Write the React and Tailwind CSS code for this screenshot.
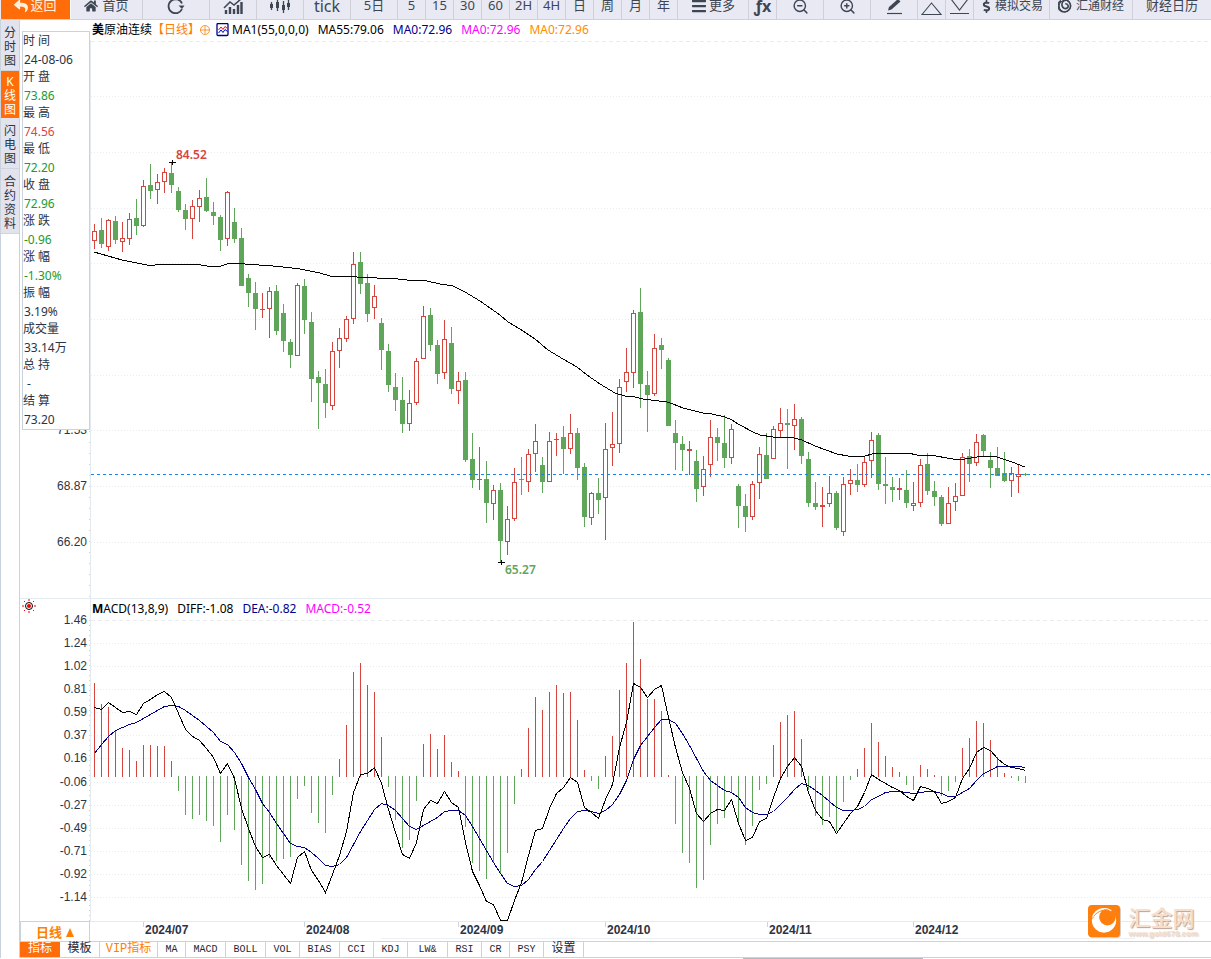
import React from "react";
import { FaReply, FaHome, FaBars, FaDollarSign } from "react-icons/fa";
import { FiZoomIn, FiZoomOut } from "react-icons/fi";

const UP = "#d6453d";
const DOWN = "#5fa55a";
const GRID = "#e9ebee";
const STEP = 7;
const FIRST_X = 94;
const ZERO_Y = 776;

// r = rising, g = falling; then high, body top, body bottom, low
const candles = `r224,231,241,249 g218,230,244,248 r219,220,247,251 g216,221,240,244 r222,238,242,252 r213,219,239,245
g199,218,226,235 r180,186,226,227 g164,185,191,199 r174,182,190,204 r168,172,182,193 g162,173,185,193 g187,191,210,212
g204,210,219,230 r200,206,219,239 r190,198,207,222 g178,197,211,212 g202,212,216,225 g215,217,240,251 r191,192,239,246
g208,222,239,243 g228,238,286,286 g274,278,293,307 g282,293,309,330 r293,309,310,318 r287,291,309,338 g285,291,331,335
g304,313,341,352 g339,342,355,368 r283,285,356,356 g279,286,320,334 g312,322,379,402 g371,377,383,429 g369,384,403,418
r342,351,406,410 r328,338,351,368 r316,319,339,342 r252,264,319,324 g252,262,284,294 g274,283,314,322 r285,296,308,319
g318,323,350,370 g344,351,385,392 g373,387,400,411 g377,400,424,433 r390,403,424,431 r358,361,403,405 r306,316,359,359
g308,315,345,351 g340,345,374,384 r320,339,373,379 g327,343,389,394 r372,381,391,404 g372,380,460,462 g433,459,480,488
r447,479,480,490 g461,479,503,523 r485,490,504,520 g483,490,541,562 r506,519,542,555 r468,482,519,521 g457,479,480,495
r449,454,482,492 r424,441,454,472 g457,465,482,493 r432,441,482,482 r433,439,440,456 g426,437,449,474 r414,433,449,454
g428,433,468,480 g463,467,517,527 r492,493,518,525 g478,493,500,514 r423,449,498,540 r412,444,448,466 r379,387,444,453
r348,372,382,392 r310,313,373,388 g288,312,384,408 g371,385,395,432 r334,348,394,396 g338,345,350,369 g358,360,426,426
g420,433,443,470 g436,444,450,471 r441,449,451,475 g450,461,489,502 r456,469,487,496 r420,437,465,477 g428,437,443,461
g415,443,458,468 r424,429,458,464 g484,486,506,528 g494,506,517,532 r481,484,517,520 r447,454,483,499 g433,455,479,479
r426,429,459,459 r408,423,431,437 g409,423,425,469 r404,419,426,450 g417,419,456,464 g452,459,503,507 g482,503,507,510
r487,505,507,527 r476,493,504,507 g491,493,528,530 r477,484,532,536 r469,480,484,495 g464,480,485,492 r456,462,485,487
r432,440,461,478 g433,435,484,490 g457,484,486,504 g477,487,490,502 r478,488,490,500 g470,490,503,508 r482,503,506,511
r459,465,503,507 g453,464,491,495 g481,491,497,506 g495,497,524,526 r487,503,524,524 r483,496,502,511 r453,457,496,496
g449,456,464,482 r434,442,463,466 g434,435,451,456 g452,460,468,488 g447,468,476,476 g452,473,481,482 r467,473,481,497
r465,474,477,493 g473,474,475,476`
  .split(/\s+/)
  .map((s) => ({ up: s[0] === "r", v: s.slice(1).split(",").map(Number) }));

const ma55 =
  "94,252 108,256 122,260 147,265 155,265 163,264 195,264 207,266 221,266 227,264 240,263 245,264 273,266 283,267 300,269 320,273 330,276 357,277 377,278 398,279 407,280 427,281 440,284 453,286 465,292 480,301 500,315 508,322 520,329 535,339 548,350 563,359 577,367 587,375 600,384 615,393 625,396 635,397 643,399 667,402 673,404 683,408 703,413 712,414 725,417 732,420 738,424 753,432 760,435 773,437 790,437 802,440 815,446 837,454 848,456 865,456 872,454 883,453 908,453 917,455 930,455 953,459 965,459 983,456 997,457 1012,462 1025,467";

const bars = [
  683, 704, 707, 730, 748, 750, 761, 745, 745, 746, 746, 761, 791, 815, 819, 815, 821, 826, 842, 815, 830, 865, 881, 890,
  884, 858, 861, 859, 857, 799, 786, 813, 823, 833, 795, 759, 725, 672, 663, 685, 692, 737, 787, 820, 848, 840, 801, 744,
  734, 749, 735, 762, 771, 827, 863, 871, 879, 862, 874, 853, 804, 769, 728, 697, 710, 692, 685, 693, 692, 720, 770, 781,
  789, 756, 736, 690, 663, 622, 659, 699, 699, 711, 775, 824, 853, 863, 888, 880, 845, 824, 818, 792, 825, 845, 826, 790,
  784, 745, 722, 715, 711, 739, 790, 816, 825, 817, 831, 802, 780, 769, 748, 723, 742, 756, 767, 772, 785, 790, 765, 769,
  775, 796, 791, 782, 748, 738, 721, 723, 740, 757, 773, 778, 781, 783,
];

const diff = [
  707, 709, 702, 707, 712, 711, 714, 703, 699, 694, 691, 697, 713, 729, 736, 740, 748, 757, 773, 763, 778, 808, 828, 846,
  857, 854, 865, 874, 883, 857, 851, 870, 880, 892, 874, 855, 831, 792, 774, 773, 767, 783, 809, 832, 854, 858, 842, 809,
  800, 803, 791, 802, 807, 842, 871, 885, 901, 904, 920, 920, 900, 882, 855, 830, 828, 808, 793, 787, 777, 782, 807, 812,
  818, 799, 784, 747, 722, 683, 687, 697, 689, 685, 717, 747, 772, 788, 813, 821, 813, 809, 810, 799, 823, 840, 837, 821,
  818, 797, 778, 766, 757, 766, 792, 810, 819, 821, 833, 823, 813, 806, 792, 774, 779, 783, 787, 790, 796, 800, 786, 788,
  791, 803, 801, 797, 778, 768, 752, 747, 750, 758, 764, 767, 768, 770,
];

const dea = [
  753, 744, 736, 730, 727, 724, 722, 718, 714, 710, 706, 705, 706, 710, 715, 720, 726, 732, 741, 744, 752, 763, 777, 789,
  803, 812, 823, 833, 843, 846, 847, 852, 858, 865, 866, 864, 857, 844, 831, 820, 809, 803, 805, 810, 818, 826, 829, 825,
  821, 817, 811, 810, 810, 815, 826, 838, 850, 862, 873, 883, 886, 885, 879, 869, 861, 850, 839, 828, 818, 811, 810, 811,
  813, 810, 804, 794, 780, 759, 745, 736, 727, 719, 719, 723, 733, 745, 758, 771, 780, 785, 790, 792, 797, 807, 812, 814,
  814, 811, 804, 797, 789, 783, 785, 790, 795, 801, 807, 810, 810, 809, 806, 799, 796, 792, 791, 791, 792, 793, 792, 791,
  791, 793, 796, 796, 792, 788, 780, 773, 770, 766, 766, 766, 766, 767,
];

const toPoints = (ys) => ys.map((y, i) => `${FIRST_X + i * STEP},${y}`).join(" ");

function GridLine({ y, dashed }) {
  return (
    <line x1="91" x2="105%" y1={y + 0.5} y2={y + 0.5} stroke={GRID} strokeDasharray={dashed ? "4 3" : "1 2"} />
  );
}

function PriceChart() {
  return (
    <svg className="block h-[558px] w-full overflow-hidden" shapeRendering="crispEdges" role="img" aria-label="美原油连续 日线">
      <g transform="translate(-20,-40)">
        <line x1="90.5" x2="90.5" y1="20" y2="598" stroke="#e4ebf0" />
        <line x1="89.5" x2="89.5" y1="431" y2="598" stroke="#cbd5de" strokeDasharray="1 10" />
        <GridLine y={41} dashed />
        {[96, 152, 208, 263, 319, 375, 430, 486, 542].map((y) => (
          <GridLine key={y} y={y} />
        ))}
        <g className="fill-[#2b3445] font-['Liberation_Sans',sans-serif] text-[12px]" textAnchor="end">
          <text x="87" y="434">71.53</text>
          <text x="87" y="490">68.87</text>
          <text x="87" y="546">66.20</text>
        </g>
        {candles.map(({ up, v: [h, t, b, l] }, i) => {
          const x = FIRST_X + i * STEP;
          const c = up ? UP : DOWN;
          return (
            <g key={i}>
              <rect x={x} y={h} width="1" height={l - h} fill={c} />
              <rect x={x - 2} y={t} width="5" height={b - t} fill={c} />
              {up && b - t > 2 && <rect x={x - 1} y={t + 1} width="3" height={b - t - 2} fill="#fff" />}
            </g>
          );
        })}
        <polyline points={ma55} fill="none" stroke="#000" />
        <line x1="91" x2="110%" y1="474.5" y2="474.5" stroke="#1583f2" strokeDasharray="3 3" />
        <path d="M169 162.5h7M172.5 160v5M498 562.5h7M501.5 560v5" stroke="#000" />
        <g className="font-['Noto_Sans',sans-serif] text-[12px] font-semibold">
          <text x="176" y="159" fill={UP}>84.52</text>
          <text x="505" y="574" fill={DOWN}>65.27</text>
        </g>
      </g>
    </svg>
  );
}

const macdTicks = [
  ["1.46", 620], ["1.24", 643], ["1.02", 666], ["0.81", 689], ["0.59", 712], ["0.37", 735], ["0.16", 758],
  ["-0.06", 782], ["-0.27", 805], ["-0.49", 828], ["-0.71", 851], ["-0.92", 874], ["-1.14", 897],
];

function MacdChart() {
  return (
    <svg className="block h-[304px] w-full overflow-visible" shapeRendering="crispEdges" role="img" aria-label="MACD">
      <g transform="translate(-20,-617)">
        <line x1="90.5" x2="90.5" y1="599" y2="921" stroke="#e4ebf0" />
        <line x1="89.5" x2="89.5" y1="620" y2="921" stroke="#cbd5de" strokeDasharray="1 4" />
        {macdTicks.map(([label, y], i) => (
          <GridLine key={label} y={y} dashed={i === 0} />
        ))}
        <g className="fill-[#2b3445] font-['Liberation_Sans',sans-serif] text-[12px]" textAnchor="end">
          {macdTicks.map(([label, y]) => (
            <text key={label} x="87" y={y + 4}>{label}</text>
          ))}
        </g>
        {bars.map((y, i) => {
          const up = y < ZERO_Y;
          return (
            <rect
              key={i}
              x={FIRST_X + i * STEP}
              y={up ? y : ZERO_Y}
              width="1"
              height={up ? ZERO_Y + 1 - y : y - ZERO_Y}
              fill={up ? UP : DOWN}
            />
          );
        })}
        <g transform="translate(0.5,0.5)" fill="none">
          <polyline points={toPoints(dea)} stroke="#00008b" />
          <polyline points={toPoints(diff)} stroke="#000" />
        </g>
      </g>
    </svg>
  );
}

const months = [["2024/07", 143], ["2024/08", 304], ["2024/09", 458], ["2024/10", 605], ["2024/11", 767], ["2024/12", 913]];

const stroke = { fill: "none", stroke: "currentColor", strokeWidth: 2 };

const RefreshIcon = () => (
  <svg width="18" height="16" viewBox="0 0 18 16">
    <path d="M15 5.500A7 7 0 1 0 15 11" {...stroke} strokeWidth="1.8" />
    <path d="M11.500 7.500h6l-2.500 3.500z" fill="currentColor" />
  </svg>
);
const TrendIcon = () => (
  <svg width="20" height="16" viewBox="0 0 20 16">
    <path d="M3 16v-4M7 16V9M11 16v-5M15 16V7M18.500 16V4" {...stroke} strokeWidth="2.400" />
    <path d="M1 10l6-6 4 3 7-6" {...stroke} strokeWidth="1.500" />
  </svg>
);
const CandleIcon = () => (
  <svg width="22" height="14" viewBox="0 0 22 14">
    <path d="M2.500 3v8M8.500 0v12M14.500 2v12M19.500 1v10" {...stroke} strokeWidth="1.300" />
    <path d="M1 5h3v4H1zM7 3h3v6H7zM13 6h3v5h-3zM18 4h3v4h-3z" fill="currentColor" />
  </svg>
);
const PenIcon = () => (
  <svg width="17" height="17" viewBox="0 0 17 17">
    <path d="M2 12.500l1-3.500L12 1l2.500 2.500L5.500 11.500z" fill="currentColor" />
    <path d="M1 15.500h15" {...stroke} strokeWidth="1.200" />
  </svg>
);
const UpIcon = () => (
  <svg width="21" height="20" viewBox="0 0 21 20">
    <path d="M1 18.500L10.500 7L20 18.500z" {...stroke} strokeWidth="1.100" />
  </svg>
);
const DownIcon = () => (
  <svg width="21" height="20" viewBox="0 0 21 20">
    <path d="M2 3L10.500 14L19 3M1 17.500h19" {...stroke} strokeWidth="1.100" />
  </svg>
);
const SwirlIcon = () => (
  <svg width="14" height="14" viewBox="0 0 14 14" fill="none" stroke="currentColor" strokeWidth="1.600">
    <path d="M3 1.500A6.200 6.200 0 1 0 9 1.200C5 1 3.500 4 4 6.500s3 4 5.200 2.500S9.500 4.500 7.300 4.800" />
    <circle cx="7" cy="7" r="5.800" strokeWidth="1" />
  </svg>
);

const tools = [
  { w: "w-[72px]", icon: <FaHome size={14} />, text: "首页" },
  { w: "w-[67px]", icon: <RefreshIcon />, label: "刷新" },
  { w: "w-[47px]", icon: <TrendIcon />, label: "分时" },
  { w: "w-[47px]", icon: <CandleIcon />, label: "K线" },
  { w: "w-[47px]", text: "tick", big: true },
  { w: "w-[47px]", text: "5日" },
  { w: "w-[28px]", text: "5" },
  { w: "w-[28px]", text: "15" },
  { w: "w-[28px]", text: "30" },
  { w: "w-[28px]", text: "60" },
  { w: "w-[28px]", text: "2H" },
  { w: "w-[28px]", text: "4H" },
  { w: "w-[28px]", text: "日" },
  { w: "w-[28px]", text: "周" },
  { w: "w-[28px]", text: "月" },
  { w: "w-[28px]", text: "年" },
  { w: "w-[71px]", icon: <FaBars size={16} />, text: "更多", tight: true },
  { w: "w-[28px]", text: "ƒx", big: true, bold: true },
  { w: "w-[47px]", icon: <FiZoomOut size={17} />, label: "缩小" },
  { w: "w-[47px]", icon: <FiZoomIn size={17} />, label: "放大" },
  { w: "w-[47px]", icon: <PenIcon />, label: "画线" },
  { w: "w-[28px]", icon: <UpIcon />, label: "上移" },
  { w: "w-[28px]", icon: <DownIcon />, label: "下移" },
  { w: "w-[76px]", icon: <FaDollarSign size={13} />, text: "模拟交易", tight: true, small: true },
  { w: "w-[83px]", icon: <SwirlIcon />, text: "汇通财经", small: true },
];

function Toolbar() {
  return (
    <header className="flex h-5 items-end overflow-hidden border-b border-[#d0d1da] bg-[#e8e9f3] pl-px text-[13px]">
      <button className="flex h-[26px] w-[70px] shrink-0 items-center justify-center gap-0.5 border-r border-white bg-[#ff6c0a] text-[#fff0dc]">
        <FaReply size={14} />
        返回
      </button>
      {tools.map((t, i) => (
        <button
          key={i}
          aria-label={t.label}
          className={`flex h-[26px] shrink-0 items-center justify-center whitespace-nowrap border-r border-[#cfcfd8] text-[#3d4652] ${t.w} ${
            t.tight ? "gap-0.5" : "gap-1"
          }`}
        >
          {t.icon}
          {t.text && (
            <span className={`${t.big ? "text-[16px]" : ""} ${t.bold ? "font-bold" : ""} ${t.small ? "text-[12px]" : ""}`}>
              {t.text}
            </span>
          )}
        </button>
      ))}
      <button className="h-[26px] flex-1 whitespace-nowrap text-[#3d4652]">财经日历</button>
    </header>
  );
}

const sideTabs = [
  { text: "分时图", h: "h-[51px]" },
  { text: "K线图", h: "h-[47px]", active: true },
  { text: "闪电图", h: "h-[51px]" },
  { text: "合约资料", h: "h-[65px]" },
];

const quote = [
  ["时 间", "24-08-06", "text-[#2b3445]"],
  ["开 盘", "73.86", "text-[#1a9b2c]"],
  ["最 高", "74.56", "text-[#dc4540]"],
  ["最 低", "72.20", "text-[#1a9b2c]"],
  ["收 盘", "72.96", "text-[#1a9b2c]"],
  ["涨 跌", "-0.96", "text-[#1a9b2c]"],
  ["涨 幅", "-1.30%", "text-[#1a9b2c]"],
  ["振 幅", "3.19%", "text-[#2b3445]"],
  ["成交量", "33.14万", "text-[#2b3445]"],
  ["总 持", "\u00a0-", "text-[#2b3445]"],
  ["结 算", "73.20", "text-[#2b3445]"],
];

const indicators = [
  ["模板", "w-[40px]"], ["VIP指标", "w-[58px]"], ["MA", "w-[28px]"], ["MACD", "w-[40px]"], ["BOLL", "w-[40px]"],
  ["VOL", "w-[34px]"], ["BIAS", "w-[40px]"], ["CCI", "w-[34px]"], ["KDJ", "w-[34px]"], ["LW&", "w-[40px]"],
  ["RSI", "w-[34px]"], ["CR", "w-[28px]"], ["PSY", "w-[34px]"], ["设置", "w-[40px]"],
];

export default function App() {
  return (
    <div className="relative min-h-screen overflow-hidden bg-white font-['Noto_Sans','Noto_Sans_CJK_SC',sans-serif] text-[12px]">
      <Toolbar />
      <div className="flex">
        <nav className="flex w-5 shrink-0 flex-col border-x border-[#c9d3dd]">
          {sideTabs.map((t) => (
            <button
              key={t.text}
              className={`flex flex-col items-center justify-center border-b pt-1 text-[12px] leading-[14px] ${t.h} ${
                t.active ? "border-[#ff6c0a] bg-[#ff6c0a] text-white" : "border-[#cdd5e0] bg-[#e2e3ed] text-[#2b3445]"
              }`}
            >
              {[...t.text].map((c) => (
                <span key={c} className="block h-[14px]">{c}</span>
              ))}
            </button>
          ))}
        </nav>

        <main className="relative min-w-0 flex-1">
          <section>
            <div className="flex h-5 items-center whitespace-nowrap pl-[72px] text-black">
              <span><b>美</b>原油连续</span>
              <span className="text-[#ff8000]">【日线】</span>
              <svg className="shrink-0" width="10" height="10" viewBox="0 0 10 10" fill="none" stroke="#ff8000">
                <circle cx="5" cy="5" r="4.500" strokeWidth="0.800" />
                <path d="M0 5h10M5 1v8" strokeWidth="0.800" />
              </svg>
              <svg className="ml-1.5 shrink-0" width="14" height="14" viewBox="0 0 14 14" fill="none">
                <rect x="1" y="0.500" width="11" height="12" rx="1" stroke="#000080" strokeWidth="1.300" />
                <path d="M2.500 7l2.500-3 2 2.500 2-3 2.500 2" stroke="#e01010" />
                <path d="M2.500 10l2.500-3 2 2.500 2-3 2.500 2" stroke="#0000c0" />
              </svg>
              <div className="ml-0.5 flex gap-[9px]">
                <span>MA1(55,0,0,0)</span>
                <span>MA55:79.06</span>
                <span className="text-[#00008b]">MA0:72.96</span>
                <span className="text-[#ff00ff]">MA0:72.96</span>
                <span className="text-[#ff8c00]">MA0:72.96</span>
              </div>
            </div>
            <PriceChart />
          </section>

          <section className="border-t border-[#e4ebf0]">
            <div className="flex h-[18px] items-start pl-0.5">
              <svg className="shrink-0" width="14" height="14" viewBox="0 0 14 14" fill="none" stroke="#f00000">
                <circle cx="7" cy="7" r="3.500" stroke="#000" />
                <circle cx="7" cy="7" r="2" fill="#f00000" stroke="none" />
                <path d="M7 0v2M7 12v2M0 7h2M12 7h2M2 2l1 1M11 11l1 1M2 12l1-1M11 3l1-1" />
              </svg>
              <div className="flex gap-[9px] pl-14 leading-5">
                <span className="text-black"><b>M</b>ACD(13,8,9)</span>
                <span className="text-black">DIFF:-1.08</span>
                <span className="text-[#00008b]">DEA:-0.82</span>
                <span className="text-[#ff00ff]">MACD:-0.52</span>
              </div>
            </div>
            <MacdChart />
          </section>

          <div className="flex h-5">
            <button className="flex w-[70px] shrink-0 items-center justify-center gap-1 border border-b-0 border-[#c9d3dd] pt-0.5 text-[13px] font-bold text-[#ff8000]">
              日线
              <svg width="8" height="9" viewBox="0 0 8 9"><path d="M4 0l4 9H0z" fill="#ff8000" /></svg>
            </button>
            <svg className="h-5 min-w-0 flex-1" shapeRendering="crispEdges">
              <line x1="0" x2="100%" y1="0.5" y2="0.5" stroke="#e4ebf0" />
              <line x1="291" x2="1045" y1="17.5" y2="17.5" stroke="#eaf0f3" />
              <g transform="translate(-90,0)" className="fill-[#2b3445] font-['Liberation_Sans',sans-serif] text-[12px] font-bold">
                {months.map(([label, x]) => (
                  <g key={label}>
                    <rect x={x} y="1" width="1" height="5" fill="#cbd5de" />
                    <text x={x + 2} y="13">{label}</text>
                  </g>
                ))}
              </g>
            </svg>
          </div>

          <div className="flex h-[17px] border-y border-[#c9d3dd] font-['Liberation_Mono','Noto_Sans_CJK_SC',monospace] text-[10px] text-[#1d2636]">
            <button className="w-[40px] shrink-0 bg-[#ff6c0a] text-[12px] leading-[15px] text-white">指标</button>
            {indicators.map(([text, w]) => (
              <button
                key={text}
                className={`shrink-0 whitespace-nowrap border-r border-[#c9d3dd] leading-[15px] ${w} ${
                  text.startsWith("VIP") ? "text-[12px] text-[#ff8000]" : /[A-Z]/.test(text) ? "" : "text-[12px]"
                }`}
              >
                {text}
              </button>
            ))}
          </div>

          <aside className="absolute left-0.5 top-[11px] w-[68px] border border-[#c9d3dd] bg-white">
            <dl className="pb-px">
              {quote.map(([k, v, color]) => (
                <React.Fragment key={k}>
                  <dt className="h-[18px] whitespace-pre leading-[18px] text-[#2b3445]">{k}</dt>
                  <dd className={`h-[18px] pl-px leading-[19px] ${color}`}>{v}</dd>
                </React.Fragment>
              ))}
            </dl>
          </aside>

          <div className="absolute bottom-[20px] right-[13px] flex items-center gap-2">
            <svg width="33" height="33" viewBox="0 0 34 34">
              <rect x="1" y="1" width="33" height="33" rx="4" fill="#d9cfc6" />
              <rect width="33" height="33" rx="4" fill="#ff7f0e" />
              <circle cx="16.500" cy="16" r="12.500" fill="#fff" />
              <circle cx="20" cy="12.500" r="8.500" fill="#ff7f0e" />
              <path d="M4.500 14C8 7 15 4.500 22 5" fill="none" stroke="#ff7f0e" strokeWidth="1" />
              <path d="M5 12A12.500 12.500 0 0 1 24 6" fill="none" stroke="#fff" strokeWidth="1.200" />
            </svg>
            <div className="flex flex-col">
              <span className="text-[22px] font-medium leading-6 text-[#f7dfcd] [text-shadow:1px_1px_1px_#b9a597]">汇金网</span>
              <span className="font-['Liberation_Sans',sans-serif] text-[8px] font-bold leading-[9px] text-[#f5dccb] [text-shadow:1px_1px_1px_#d9cabf]">www.gold678.com</span>
            </div>
          </div>
        </main>
      </div>
      <div className="flex h-px justify-center pl-[455px]">
        <div className="h-px w-[180px] bg-[#b4b8bc]" />
      </div>
    </div>
  );
}
